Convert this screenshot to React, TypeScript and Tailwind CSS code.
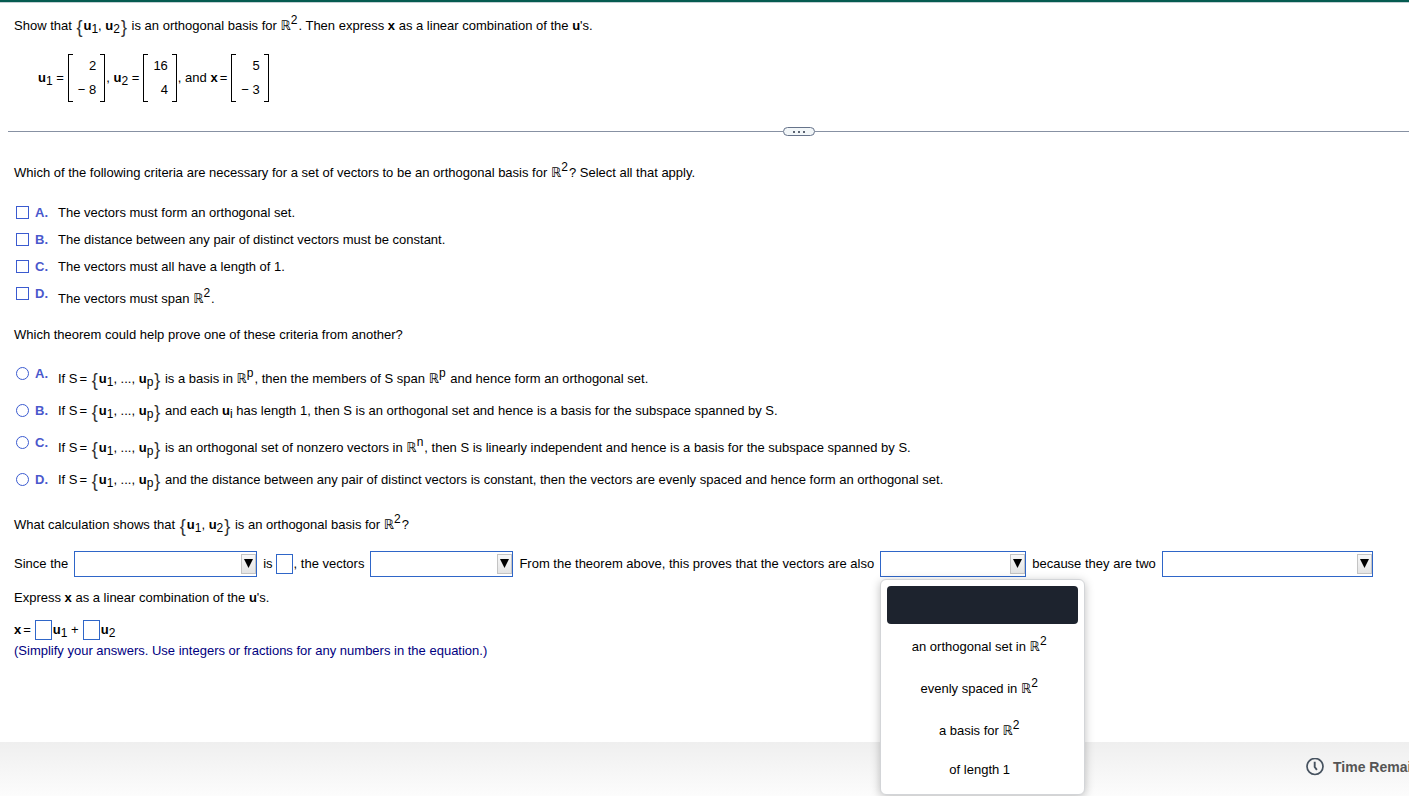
import React, { useState } from 'react';

const Sub: React.FC<{ children: React.ReactNode }> = ({ children }) => (
  <sub className="static align-[-3px] text-[12px] font-normal">{children}</sub>
);

// Blackboard R with its exponent
const Real: React.FC<{ exp: string }> = ({ exp }) => (
  <span className="whitespace-nowrap">
    <span className="font-['DejaVu_Sans',sans-serif] text-[13px] leading-none">ℝ</span>
    <sup className="static mr-px align-[6px] text-[12px]">{exp}</sup>
  </span>
);

const U: React.FC<{ index: string }> = ({ index }) => (
  <span className="whitespace-nowrap">
    <b>u</b>
    <Sub>{index}</Sub>
  </span>
);

const Brace: React.FC<{ children: string }> = ({ children }) => (
  <span className="mx-px align-[-3px] text-[18px] leading-none text-[#333]">{children}</span>
);

const Equals = () => <span className="ml-[2px]">=</span>;

const Pair = () => (
  <span className="whitespace-nowrap">
    <Brace>{'{'}</Brace>
    <U index="1" />, <U index="2" />
    <Brace>{'}'}</Brace>
  </span>
);

const Family = () => (
  <span className="whitespace-nowrap">
    If S<Equals /> <Brace>{'{'}</Brace>
    <U index="1" />, ..., <U index="p" />
    <Brace>{'}'}</Brace>
  </span>
);

const Vector: React.FC<{ top: string; bottom: string }> = ({ top, bottom }) => (
  <span className="flex h-12">
    <span className="w-[5px] border-y border-l border-black" />
    <span className="flex flex-col pr-1 pl-[5px] text-right leading-6">
      <span>{top}</span>
      <span>{bottom}</span>
    </span>
    <span className="w-[5px] border-y border-r border-black" />
  </span>
);

interface OptionProps {
  type: 'checkbox' | 'radio';
  name: string;
  letter: string;
  tall?: boolean;
  children: React.ReactNode;
}

const Option: React.FC<OptionProps> = ({ type, name, letter, tall, children }) => (
  <label className="flex items-start">
    <input
      type={type}
      name={name}
      className={`mt-[3px] mr-[6px] size-[13px] shrink-0 appearance-none border border-[#3b5bd0] bg-white checked:bg-[#3b5bd0] ${
        type === 'radio' ? 'rounded-full' : ''
      }`}
    />
    <span className="w-[23px] shrink-0 font-bold text-[#4a58cc]">{letter}.</span>
    <span className={tall ? 'pt-[5px]' : ''}>{children}</span>
  </label>
);

interface DropdownProps {
  label: string;
  width: string;
  options?: string[];
  children?: React.ReactNode;
}

const Dropdown: React.FC<DropdownProps> = ({ label, width, options = [], children }) => (
  <span className="relative mx-[6px] inline-flex">
    <select
      aria-label={label}
      className={`h-[26px] appearance-none border border-[#2f66c8] bg-white px-2 ${width}`}
    >
      <option value=""></option>
      {options.map((o) => (
        <option key={o}>{o}</option>
      ))}
    </select>
    <span className="pointer-events-none absolute top-[3px] right-px flex h-5 w-[15px] justify-center border border-[#c4c4c4] bg-linear-to-b from-[#f8f8f8] to-[#e4e4e4] pt-1">
      <svg width="9" height="9" viewBox="0 0 9 9">
        <path d="M0 0h9L4.5 9z" fill="#000" />
      </svg>
    </span>
    {children}
  </span>
);

const Blank: React.FC<{ label: string }> = ({ label }) => (
  <input
    type="text"
    aria-label={label}
    className="h-5 w-[17px] border border-[#2f66c8] bg-white text-center"
  />
);

const App = () => {
  const [active, setActive] = useState(0);

  const choices = [
    { body: null, style: 'h-[38px]' },
    { body: <>an orthogonal set in <Real exp="2" /></>, style: 'pt-[13px] pb-[9px]' },
    { body: <>evenly spaced in <Real exp="2" /></>, style: 'pt-[13px] pb-[9px]' },
    { body: <>a basis for <Real exp="2" /></>, style: 'pt-[13px] pb-[9px]' },
    { body: <>of length 1</>, style: 'pt-[10px] pb-2' },
  ];

  return (
    <div className="flex h-screen flex-col overflow-hidden bg-white font-['Liberation_Sans',Arial,sans-serif] text-[13px] leading-5 text-black">
      <div className="h-[3px] shrink-0 border-b border-[#c3cfd3] bg-[#055b50]" />

      <main className="grow">
        {/* Problem statement */}
        <section className="px-[14px] pt-[13px]">
          <p>
            Show that <Pair /> is an orthogonal basis for <Real exp="2" />. Then express <b>x</b> as a linear
            combination of the <b>u</b>'s.
          </p>
          <div className="mt-[18px] flex items-center pl-6">
            <span className="pr-1"><U index="1" /> =</span>
            <Vector top="2" bottom="− 8" />
            <span className="pr-1 pl-px">, <U index="2" /> =</span>
            <Vector top="16" bottom="4" />
            <span className="pr-1 pl-px">, and <b>x</b><Equals /></span>
            <Vector top="5" bottom="− 3" />
          </div>
        </section>

        {/* Divider */}
        <div className="mt-[25px] flex items-center pl-2">
          <span className="h-px grow-[775] bg-[#8791a3]" />
          <button
            aria-label="Show more"
            className="flex h-[9px] w-8 items-center justify-center gap-[3px] rounded-full border border-[#66738a] bg-[#f2f6f8]"
          >
            <span className="size-[2px] bg-[#5b6472]" />
            <span className="size-[2px] bg-[#5b6472]" />
            <span className="size-[2px] bg-[#5b6472]" />
          </button>
          <span className="h-px grow-[594] bg-[#8791a3]" />
        </div>

        <section className="px-[14px] pt-[27px]">
          <p>
            Which of the following criteria are necessary for a set of vectors to be an orthogonal basis for{' '}
            <Real exp="2" />? Select all that apply.
          </p>
          <div className="mt-5 flex flex-col gap-[7px] pl-[2px]">
            <Option type="checkbox" name="criteria" letter="A">The vectors must form an orthogonal set.</Option>
            <Option type="checkbox" name="criteria" letter="B">
              The distance between any pair of distinct vectors must be constant.
            </Option>
            <Option type="checkbox" name="criteria" letter="C">The vectors must all have a length of 1.</Option>
            <Option type="checkbox" name="criteria" letter="D" tall>
              The vectors must span <Real exp="2" />.
            </Option>
          </div>

          <p className="mt-4">Which theorem could help prove one of these criteria from another?</p>
          <div className="mt-[19px] flex flex-col gap-3 pl-[2px]">
            <Option type="radio" name="theorem" letter="A" tall>
              <Family /> is a basis in <Real exp="p" />, then the members of S span <Real exp="p" /> and hence form an
              orthogonal set.
            </Option>
            <Option type="radio" name="theorem" letter="B">
              <Family /> and each <U index="i" /> has length 1, then S is an orthogonal set and hence is a basis for
              the subspace spanned by S.
            </Option>
            <Option type="radio" name="theorem" letter="C" tall>
              <Family /> is an orthogonal set of nonzero vectors in <Real exp="n" />, then S is linearly independent
              and hence is a basis for the subspace spanned by S.
            </Option>
            <Option type="radio" name="theorem" letter="D">
              <Family /> and the distance between any pair of distinct vectors is constant, then the vectors are
              evenly spaced and hence form an orthogonal set.
            </Option>
          </div>

          <p className="mt-[25px]">
            What calculation shows that <Pair /> is an orthogonal basis for <Real exp="2" />?
          </p>
          <div className="mt-4 flex flex-wrap items-center">
            Since the
            <Dropdown label="Calculation" width="w-[183px]" options={['inner product', 'distance']} />
            <span className="pr-[3px]">is</span>
            <Blank label="Value" />
            <span className="pl-px">, the vectors</span>
            <Dropdown label="Vectors are" width="w-[143px]" options={['are orthogonal', 'are parallel']} />
            From the theorem above, this proves that the vectors are also
            <Dropdown label="Vectors are also" width="w-[146px]">
              <ul
                role="listbox"
                aria-label="Vectors are also"
                className="absolute top-[28px] left-0 z-10 w-[205px] rounded-md border border-[#d3d5d8] bg-white px-[6px] py-[6px] text-center shadow-[0_2px_10px_rgba(0,0,0,0.25)]"
              >
                {choices.map((c, i) => (
                  <li
                    key={i}
                    role="option"
                    aria-selected={active === i}
                    onClick={() => setActive(i)}
                    className={`rounded-sm pr-[6px] ${c.style} ${active === i ? 'bg-[#1d232e] text-white' : ''}`}
                  >
                    {c.body}
                  </li>
                ))}
              </ul>
            </Dropdown>
            because they are two
            <Dropdown label="Reason" width="w-[211px]" options={['linearly independent vectors']} />
          </div>

          <p className="mt-[11px]">
            Express <b>x</b> as a linear combination of the <b>u</b>'s.
          </p>
          <div className="mt-3 flex items-center">
            <span className="pr-1"><b>x</b><Equals /></span>
            <Blank label="Coefficient of u1" />
            <span className="pr-1 pl-px"><U index="1" /> +</span>
            <Blank label="Coefficient of u2" />
            <span className="pl-px"><U index="2" /></span>
          </div>
          <p className="pt-px text-[#000080]">
            (Simplify your answers. Use integers or fractions for any numbers in the equation.)
          </p>
        </section>
      </main>

      <footer className="flex h-[54px] shrink-0 justify-end bg-linear-to-b from-[#efefef] to-[#fcfcfc]">
        <div className="flex w-[103px] items-center gap-2 pb-1 text-sm font-bold whitespace-nowrap text-[#555]">
          <svg className="shrink-0" width="19" height="19" viewBox="0 0 19 19" fill="none" stroke="#46525f">
            <circle cx="9" cy="8.5" r="8" strokeWidth="1.7" />
            <path d="M8.7 3.8v5.2l2.2 2.8" strokeWidth="1.9" />
          </svg>
          Time Remaining
        </div>
      </footer>
    </div>
  );
};

export default App;
